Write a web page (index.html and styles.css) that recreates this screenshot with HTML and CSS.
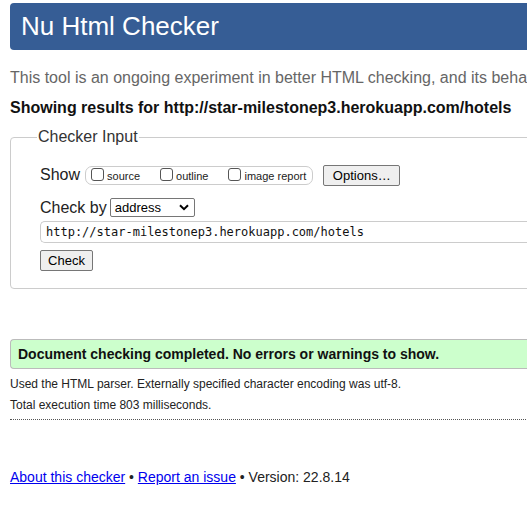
FILE: index.html
```html
<!DOCTYPE html>
<html>
<head>
<meta charset="utf-8">
<link rel="stylesheet" href="styles.css">
</head>
<body>
<div class="page">
  <h1 class="banner">Nu Html Checker</h1>
  <p class="intro">This tool is an ongoing experiment in better HTML checking, and its behavior remains subject to change</p>
  <p class="showing">Showing results for http://star-milestonep3.herokuapp.com/hotels</p>
  <fieldset class="input-box">
    <legend class="legend">Checker Input</legend>
    <div class="inner">
      <div class="row show-row">
        <span class="row-label">Show</span>
        <span class="show-group">
          <label class="opt"><span class="cb"></span>source</label>
          <label class="opt"><span class="cb"></span>outline</label>
          <label class="opt"><span class="cb"></span>image report</label>
        </span>
        <button class="btn options">Options…</button>
      </div>
      <div class="row by-row">
        <span class="row-label">Check by</span>
        <span class="select">address<svg class="chev" width="10" height="7" viewBox="0 0 10 7"><path d="M1 1.2 L5 5.2 L9 1.2" fill="none" stroke="#000" stroke-width="2"/></svg></span>
      </div>
      <div class="url">http://star-milestonep3.herokuapp.com/hotels</div>
      <button class="btn check">Check</button>
    </div>
  </fieldset>
  <div class="success">Document checking completed. No errors or warnings to show.</div>
  <p class="details">Used the HTML parser. Externally specified character encoding was utf-8.</p>
  <p class="details">Total execution time 803 milliseconds.</p>
  <hr class="dots">
  <p class="footer"><a href="#">About this checker</a> • <a href="#">Report an issue</a> • Version: 22.8.14</p>
</div>
</body>
</html>
```

FILE: styles.css
```css
html, body {
  margin: 0;
  padding: 0;
  overflow: hidden;
  background: #fff;
}
body {
  font-family: "Liberation Sans", Arial, sans-serif;
  color: #222;
}
.page {
  width: 900px;
  padding: 3px 0 0 10px;
}
.banner {
  margin: 0;
  height: 47px;
  box-sizing: border-box;
  background: #365d95;
  color: #fff;
  font-weight: normal;
  font-size: 26px;
  line-height: 47px;
  padding-left: 11px;
  border-radius: 4px;
}
.intro {
  margin: 18px 0 0;
  font-size: 16px;
  line-height: 20px;
  color: #666;
  white-space: nowrap;
}
.showing {
  margin: 10px 0 0;
  font-size: 16px;
  line-height: 20px;
  font-weight: bold;
  color: #111;
}
.input-box {
  margin: 10px 0 0;
  border: 1px solid #ccc;
  border-radius: 4px;
  padding: 0 0 17px 0;
  min-inline-size: 0;
}
.legend {
  margin-left: 26px;
  padding: 0 1px;
  font-size: 16px;
  color: #333;
}
.inner {
  padding-left: 29px;
}
.row {
  display: flex;
  align-items: center;
}
.row-label {
  font-size: 16px;
  color: #222;
}
.show-row {
  margin-top: 18px;
  height: 22px;
}
.show-group {
  display: flex;
  align-items: center;
  gap: 15px;
  margin-left: 5px;
  height: 19px;
  box-sizing: border-box;
  border: 1px solid #ccc;
  border-radius: 7px;
  padding: 0 6px 0 5px;
}
.opt {
  display: flex;
  align-items: center;
  font-size: 11px;
  color: #222;
  margin-right: 5px;
  padding-top: 2px;
}
.opt:last-child { margin-right: 0; }
.cb {
  display: inline-block;
  width: 13px;
  height: 13px;
  box-sizing: border-box;
  border: 1px solid #555;
  border-radius: 3px;
  margin-right: 3px;
  margin-top: -4px;
}
.btn {
  font-family: "Liberation Sans", Arial, sans-serif;
  font-size: 13px;
  color: #000;
  background: #efefef;
  border: 1px solid #767676;
  border-radius: 2px;
  padding: 0 8px;
  height: 21px;
}
.options {
  margin-left: 10px;
  width: 77px;
}
.by-row {
  margin-top: 12px;
}
.select {
  display: inline-flex;
  align-items: center;
  justify-content: space-between;
  margin-left: 3px;
  width: 85px;
  height: 19px;
  box-sizing: border-box;
  border: 1px solid #767676;
  border-radius: 2px;
  padding: 0 5px 0 4px;
  font-size: 13px;
  color: #000;
}
.url {
  margin-top: 4px;
  height: 22px;
  box-sizing: border-box;
  border: 1px solid #ccc;
  border-right: none;
  border-radius: 5px 0 0 5px;
  padding-left: 5px;
  font-family: "DejaVu Sans Mono", "Liberation Mono", monospace;
  font-size: 12px;
  line-height: 20px;
  color: #111;
}
.check {
  margin-top: 7px;
  width: 53px;
  padding: 0;
}
.success {
  margin-top: 50px;
  height: 30px;
  box-sizing: border-box;
  border: 1px solid #bbb;
  border-right: none;
  border-radius: 4px 0 0 4px;
  background: #ccffcc;
  padding-left: 7px;
  font-size: 14px;
  font-weight: bold;
  line-height: 28px;
  color: #111;
}
.details {
  margin: 8px 0 0;
  font-size: 12px;
  line-height: 14px;
  color: #222;
}
.details + .details {
  margin-top: 7px;
}
.dots {
  margin: 7px 0 0;
  border: none;
  border-top: 1px dotted #555;
  height: 0;
}
.footer {
  margin: 49px 0 0;
  font-size: 14px;
  line-height: 16px;
  color: #222;
}
.footer a {
  color: #0000ee;
}
```
